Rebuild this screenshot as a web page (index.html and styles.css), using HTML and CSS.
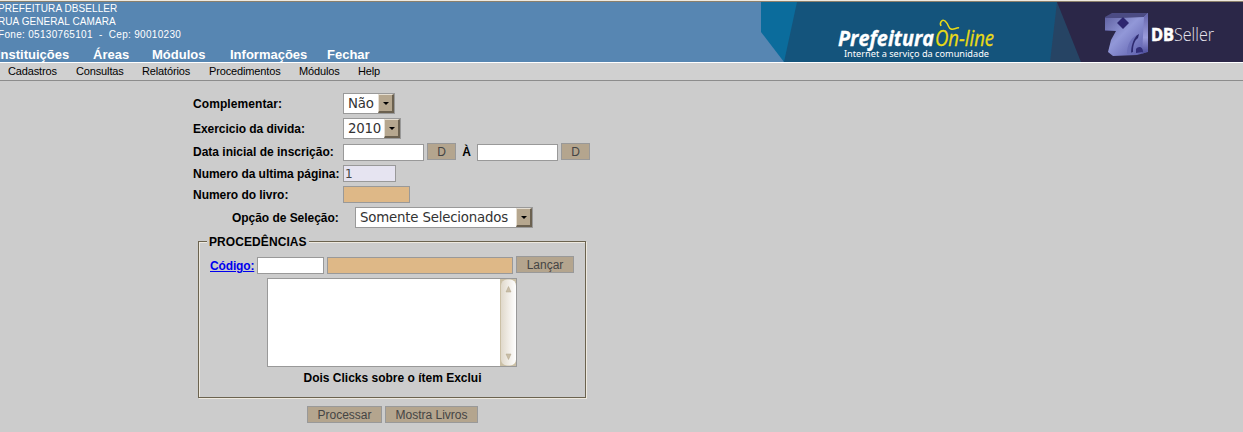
FILE: index.html
```html
<!DOCTYPE html>
<html lang="pt-BR">
<head>
<meta charset="utf-8">
<title>DBSeller - Prefeitura On-line</title>
<link rel="stylesheet" href="styles.css">
</head>
<body>
<header class="banner">
  <div class="identity">
    <div class="address">
      <div>PREFEITURA DBSELLER</div>
      <div>RUA GENERAL CAMARA</div>
      <div class="phone">Fone: 05130765101 &nbsp;- &nbsp;Cep: 90010230</div>
    </div>
    <nav class="main-nav"><a class="n1">Instituições</a><a class="n2">Áreas</a><a class="n3">Módulos</a><a class="n4">Informações</a><a>Fechar</a></nav>
  </div>
  <svg class="brand" width="482" height="60" viewBox="761 2 482 60">
    <defs>
      <linearGradient id="cube" x1="0" y1="0" x2="1" y2="1"><stop offset="0" stop-color="#5b5c9c"/><stop offset=".45" stop-color="#9298d8"/><stop offset="1" stop-color="#5555a5"/></linearGradient>
      <linearGradient id="side" x1="0" y1="0" x2="0" y2="1"><stop offset="0" stop-color="#6464ab"/><stop offset=".6" stop-color="#9b9cdb"/><stop offset="1" stop-color="#4b4b99"/></linearGradient>
      <filter id="soft"><feGaussianBlur stdDeviation=".5"/></filter>
    </defs>
    <path fill="#14547c" d="M761 2H1243V62H784z"/>
    <path fill="#0b6c9c" d="M761 2H797L784 62L761 32z"/>
    <path fill="#264464" d="M1057 2H1085V62H1050z"/>
    <path fill="#2b2748" d="M1057 2H1243V62H1081z"/>
    <g filter="url(#soft)">
      <path fill="#4c4c83" d="M1105 17L1112 13H1148L1144 18L1121 19L1120 31H1105z"/>
      <path fill="url(#cube)" d="M1105 18H1121L1144 17L1148 13V52L1137 55L1113 56L1108 52L1111 40L1116 31L1105 30z"/>
      <path fill="url(#side)" d="M1144 17L1148 13V51L1142 54z"/>
      <path fill="#2d2870" d="M1123 17L1129 23L1123 29L1117 23z"/>
      <path fill="#2e2c70" d="M1130 53C1130 43 1133 37 1139 34L1138 38C1134 41 1133 46 1133 52z"/>
      <path fill="#6c6fb9" d="M1127 54C1127 44 1131 38 1137 35C1133 40 1131 46 1131 54z"/>
      <path fill="#302e78" d="M1136 49C1138 46 1143 46 1143 52L1136 53z"/>
    </g>
    <text class="logo-bold" x="838" y="46" textLength="96" lengthAdjust="spacingAndGlyphs">Prefeitura</text>
    <text class="logo-thin" x="935" y="46" textLength="59" lengthAdjust="spacingAndGlyphs">On-line</text>
    <path fill="none" stroke="#eadb16" stroke-width="1.5" d="M941 26C939 22 943 18 946 22C949 25 948 28 951 29C954 30 957 27 959 28"/>
    <text class="slogan" x="844" y="57" textLength="145" lengthAdjust="spacingAndGlyphs">Internet a serviço da comunidade</text>
    <text class="db" x="1151" y="41" textLength="23" lengthAdjust="spacingAndGlyphs">DB</text>
    <text class="seller" x="1174" y="41" textLength="40" lengthAdjust="spacingAndGlyphs">Seller</text>
  </svg>
</header>
<nav class="sub-nav"><a class="m1">Cadastros</a><a class="m2">Consultas</a><a class="m3">Relatórios</a><a class="m4">Procedimentos</a><a class="m5">Módulos</a><a>Help</a></nav>
<main class="form">
  <div class="row r1"><label>Complementar:</label><div class="select s1"><span>Não</span><i></i></div></div>
  <div class="row r2"><label>Exercicio da divida:</label><div class="select s2"><span>2010</span><i></i></div></div>
  <div class="row r3"><label>Data inicial de inscrição:</label><div class="field date"></div><button class="d">D</button><b class="to">À</b><div class="field date"></div><button class="d">D</button></div>
  <div class="row r4"><label>Numero da ultima página:</label><div class="field page">1</div></div>
  <div class="row r5"><label>Numero do livro:</label><div class="field book"></div></div>
  <div class="row r6"><label class="option">Opção de Seleção:</label><div class="select s3"><span>Somente Selecionados</span><i></i></div></div>
  <section class="group">
    <div class="legend">PROCEDÊNCIAS</div>
    <div class="code-row"><a class="code">Código:</a><div class="field code-input"></div><div class="field desc"></div><button class="launch">Lançar</button></div>
    <div class="list"><svg width="16" height="87" viewBox="0 0 16 87">
      <defs><linearGradient id="track"><stop offset="0" stop-color="#e0d9cb"/><stop offset=".6" stop-color="#f3f0eb"/><stop offset="1" stop-color="#fff"/></linearGradient></defs>
      <path fill="#cbc0a6" d="M0 0H16V87H0z"/><rect x="1" y="0.5" width="15" height="86" rx="6" fill="url(#track)"/>
      <path fill="#c9bea8" stroke="#b1a488" stroke-width=".5" d="M8.500 7.500L11 13H6zM8.500 80.500L11 75H6z"/>
    </svg></div>
    <div class="hint">Dois Clicks sobre o ítem Exclui</div>
  </section>
  <div class="actions"><button class="process">Processar</button><button class="show">Mostra Livros</button></div>
</main>
</body>
</html>
```
FILE: styles.css
```css
* { box-sizing: border-box; }
body { margin: 0; width: 1243px; height: 432px; overflow: hidden; background: #ccc; color: #000; font: 12px "Liberation Sans", Arial, sans-serif; }
.banner { display: flex; justify-content: space-between; height: 63px; border-top: 1px solid #eee9df; border-bottom: 1px solid #fff; background: #5786b2; box-shadow: inset 0 1px #8b806c; }
.identity { color: #fff; white-space: nowrap; }
.address { height: 46px; padding-top: 1px; margin-left: -2px; font-size: 10px; line-height: 13px; letter-spacing: .08px; }
.phone { letter-spacing: .31px; }
.main-nav { display: flex; margin-left: -3px; font-size: 13px; font-weight: bold; line-height: 16px; }
.n1 { width: 96px; }
.n2 { width: 59px; }
.n3 { width: 78px; }
.n4 { width: 97px; }
.brand { display: block; margin-top: 1px; }
.logo-bold { font: italic bold 21px "Open Sans", sans-serif; fill: #fff; stroke: #fff; stroke-width: .3px; }
.logo-thin { font: italic 21px "Open Sans", sans-serif; fill: #eadb16; stroke: #eadb16; stroke-width: .3px; }
.slogan { font: 9px "Noto Sans", sans-serif; fill: #fff; }
.db { font: bold 17px "Open Sans", sans-serif; fill: #fff; stroke: #fff; stroke-width: .6px; }
.seller { font: 300 18px "Open Sans", sans-serif; fill: #e5e3ec; }
.sub-nav { display: flex; height: 18px; padding-left: 8px; border-bottom: 1px solid #8c8c8c; background: #d0d0d0; font-size: 11px; line-height: 17px; letter-spacing: -.14px; }
.m1 { width: 68px; }
.m2 { width: 66px; }
.m3 { width: 67px; }
.m4 { width: 90px; }
.m5 { width: 59px; }
.form { padding: 13px 0 0 193px; }
.row { display: flex; align-items: flex-start; }
label { width: 150px; font-weight: bold; line-height: 21px; white-space: nowrap; letter-spacing: -.04px; }
.r1 { height: 24px; }
.r2 { height: 25px; }
.r3 { height: 22px; }
.r4 { height: 21px; }
.r5 { height: 21px; }
.r6 { height: 34px; }
.r1 label { letter-spacing: .08px; }
.r1 .select { margin-top: -1px; }
.r2 label { line-height: 23px; }
.select { display: flex; justify-content: space-between; height: 21px; border: 1px solid #999; background: #fff; color: #333; font: 13.33px/20px "DejaVu Sans", sans-serif; letter-spacing: -.19px; padding-left: 4px; white-space: nowrap; }
.select i { display: flex; width: 16px; height: 19px; align-items: center; justify-content: center; border: solid; border-width: 1px 2px 2px 1px; border-color: #e5ded2 #6b6150 #6b6150 #e5ded2; background: #b6a78f; }
.select i::after { content: ""; border: 3px solid transparent; border-top-color: #000; border-bottom: 0; }
.s1 { width: 52px; }
.s2 { width: 58px; }
.s3 { width: 178px; }
.field { height: 17px; border: 1px solid #999; background: #fff; }
.date { width: 81px; margin-top: 1px; }
.r3 label { line-height: 18px; letter-spacing: 0; }
.r4 label, .r5 label { line-height: 19px; }
.r6 .option { width: 162px; padding-left: 39px; line-height: 22px; }
.page { width: 53px; background: #e6e4f1; color: #444; padding-left: 1px; font: 12px/16px "DejaVu Sans", sans-serif; }
.book { width: 67px; background: #deb887; }
button { display: block; height: 17px; padding: 0; border: 1px solid #999; border-radius: 0; background: #b4a58e; color: #444; font: 12px/17px "Liberation Sans", Arial, sans-serif; }
.d { width: 29px; margin-left: 3px; }
.to { width: 21px; text-align: center; line-height: 19px; }
.group { width: 388px; height: 157px; margin-left: 5px; border: 1px solid #6b634f; box-shadow: inset 1px 1px #eee9df, 1px 1px #eee9df; }
.legend { width: 102px; height: 15px; margin: -8px 0 0 8px; padding-left: 2px; background: #ccc; font-weight: bold; line-height: 16px; letter-spacing: .08px; }
.code-row { display: flex; height: 22px; margin: 7px 0 0 11px; }
.code { width: 47px; color: #00e; font-weight: bold; text-decoration: underline; line-height: 20px; letter-spacing: -.15px; }
.code-input { width: 67px; margin: 1px 3px 0 0; }
.desc { width: 186px; margin: 1px 3px 0 0; background: #deb887; }
.launch { width: 58px; }
.list { display: flex; justify-content: flex-end; width: 250px; height: 89px; margin-left: 68px; border: 1px solid #999; background: #fff; }
.hint { margin-top: 4px; padding-left: 1px; text-align: center; font-weight: bold; line-height: 15px; }
.actions { display: flex; gap: 3px; margin: 8px 0 0 114px; }
.process { width: 75px; }
.show { width: 93px; }
```
